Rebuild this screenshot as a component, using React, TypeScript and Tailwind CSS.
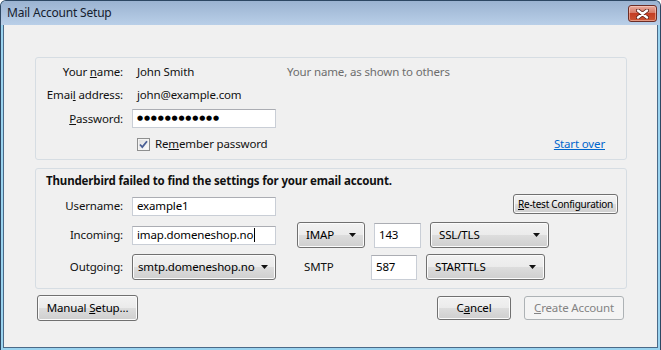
import React from 'react';

const btnBase =
  'flex items-center whitespace-nowrap rounded-[3px] border border-[#707070] bg-[linear-gradient(to_bottom,#f2f2f2_0%,#ebebeb_49%,#dddddd_50%,#cfcfcf_100%)] shadow-[inset_0_0_0_1px_#fbfbfb] text-black';

const inputClass =
  'flex items-center whitespace-nowrap bg-white border border-[#c9ced6] border-t-[#abadb3] pl-[4px] text-black';

const Arrow: React.FC = () => (
  <svg width="7" height="4" viewBox="0 0 7 4" className="shrink-0">
    <path d="M0 0h7L3.5 4z" fill="#111" />
  </svg>
);

const Dropdown: React.FC<{ label: string; className: string }> = ({ label, className }) => (
  <div className={`${btnBase} justify-between pl-[8px] pr-[8px] ${className}`}>
    <span>{label}</span>
    <Arrow />
  </div>
);

const Label: React.FC<{ children: React.ReactNode }> = ({ children }) => (
  <div className="w-[87px] shrink-0 text-right whitespace-nowrap">{children}</div>
);

const Checkbox: React.FC = () => (
  <div className="w-[13px] h-[13px] border border-[#8e8f8f] bg-[linear-gradient(135deg,#dcdcdc,#ffffff)] shadow-[inset_0_0_0_1px_#f4f4f4] flex items-center justify-center">
    <svg width="9" height="9" viewBox="0 0 9 9">
      <path d="M1 4.5l2.3 2.6L8 1.2" fill="none" stroke="#4a5f95" strokeWidth="1.8" />
    </svg>
  </div>
);

const App: React.FC = () => {
  return (
    <div className="w-[661px] h-[350px] flex flex-col border-t border-x border-[#2d4763] rounded-t-[6px] bg-[#9ad3ef] overflow-hidden font-['Noto_Sans',sans-serif] text-[11.5px] tracking-[-0.15px] text-[#111]">
      {/* title bar */}
      <div className="h-[24px] shrink-0 flex items-start justify-between bg-[linear-gradient(to_bottom,#9bb3d1,#b9cfe8)]">
        <div className="pl-[6px] pt-[4px] leading-[16px] text-[12px] tracking-[-0.2px] text-[#15202e]">Mail Account Setup</div>
        <div className="mt-[4px] mr-[3px] w-[29px] h-[17px] rounded-[3px] border border-[#6b2d26] bg-[linear-gradient(to_bottom,#e9aa9c_0%,#d77a66_45%,#c43d23_50%,#cb5533_100%)] shadow-[inset_0_0_0_1px_rgba(255,220,210,0.5)] flex items-center justify-center">
          <svg width="13" height="10" viewBox="0 0 13 10">
            <path d="M2 1.5l9 7M11 1.5l-9 7" stroke="#5a1f18" strokeWidth="4" strokeLinecap="round" />
            <path d="M2 1.5l9 7M11 1.5l-9 7" stroke="#ffffff" strokeWidth="2.4" strokeLinecap="round" />
          </svg>
        </div>
      </div>

      {/* client area */}
      <div className="flex-1 mx-[2px] mb-[2px] border-x border-b border-[#4c6a88] bg-[#f0f0f0] pl-[31px] pt-[32px]">
        {/* identity panel */}
        <div className="w-[592px] rounded-[3px] border border-[#d6dde3] pt-[2px] pb-[2px]">
          <div className="h-[23px] flex items-center">
            <Label>
              Your <u>n</u>ame:
            </Label>
            <span className="ml-[9px] w-[155px] pl-[5px]">John Smith</span>
            <span className="text-[#6d6d6d]">Your name, as shown to others</span>
          </div>
          <div className="h-[23px] flex items-center">
            <Label>
              Emai<u>l</u> address:
            </Label>
            <span className="ml-[9px] pl-[5px]">john@example.com</span>
          </div>
          <div className="h-[25px] flex items-center">
            <Label>
              <u>P</u>assword:
            </Label>
            <div className={`${inputClass} ml-[9px] w-[144px] h-[19px]`}>
              <span className="font-['DejaVu_Sans',sans-serif] text-[7px] tracking-[0.8px] leading-none">
                ●●●●●●●●●●●●
              </span>
            </div>
          </div>
          <div className="h-[26px] flex items-center">
            <div className="w-[87px] shrink-0" />
            <div className="ml-[9px] pl-[5px] flex items-center gap-[5px]">
              <Checkbox />
              <span>
                Re<u>m</u>ember password
              </span>
            </div>
            <span className="ml-auto mr-[21px] text-[#0066cc] underline">Start over</span>
          </div>
        </div>

        {/* server panel */}
        <div className="mt-[8px] w-[592px] rounded-[3px] border border-[#d6dde3] pb-[4px]">
          <div className="h-[23px] flex items-center pl-[10px] font-bold">
            Thunderbird failed to find the settings for your email account.
          </div>
          <div className="h-[28px] flex items-center">
            <Label>Username:</Label>
            <div className={`${inputClass} ml-[9px] w-[144px] h-[19px]`}>example1</div>
            <div className={`${btnBase} justify-center ml-auto mr-[8px] mb-[4px] w-[105px] h-[20px] text-[10px] tracking-[-0.25px]`}>
              <span>
                <u>R</u>e-test Configuration
              </span>
            </div>
          </div>
          <div className="h-[30px] flex items-center">
            <Label>Incoming:</Label>
            <div className={`${inputClass} ml-[9px] w-[144px] h-[19px] border-[#7eb4ea] border-t-[#569de5]`}>
              imap.domeneshop.no
              <span className="w-px h-[14px] bg-black ml-[1px]" />
            </div>
            <Dropdown label="IMAP" className="ml-[21px] w-[68px] h-[26px]" />
            <div className={`${inputClass} ml-[9px] w-[47px] h-[25px]`}>143</div>
            <Dropdown label="SSL/TLS" className="ml-[9px] w-[119px] h-[26px]" />
          </div>
          <div className="h-[34px] flex items-center">
            <Label>Outgoing:</Label>
            <div className={`${btnBase} justify-between ml-[9px] w-[144px] h-[26px] pl-[5px] pr-[7px]`}>
              <span>smtp.domeneshop.no</span>
              <Arrow />
            </div>
            <span className="w-[95px] pl-[28px]">SMTP</span>
            <div className={`${inputClass} w-[46px] h-[25px]`}>587</div>
            <Dropdown label="STARTTLS" className="ml-[9px] w-[119px] h-[26px]" />
          </div>
        </div>

        {/* buttons */}
        <div className="mt-[6px] w-[592px] h-[26px] flex items-center">
          <div className={`${btnBase} justify-center ml-[2px] w-[101px] h-[26px] border-[#3c3c3c]`}>
            <span>
              Manual <u>S</u>etup...
            </span>
          </div>
          <div className={`${btnBase} justify-center ml-auto w-[74px] h-[24px]`}>
            <span>
              C<u>a</u>ncel
            </span>
          </div>
          <div className="ml-[13px] mr-[3px] w-[100px] h-[24px] rounded-[3px] border border-[#adb2b5] bg-[#f4f4f4] text-[#838383] flex items-center justify-center whitespace-nowrap">
            <span>
              <u>C</u>reate Account
            </span>
          </div>
        </div>
      </div>
    </div>
  );
};

export default App;
